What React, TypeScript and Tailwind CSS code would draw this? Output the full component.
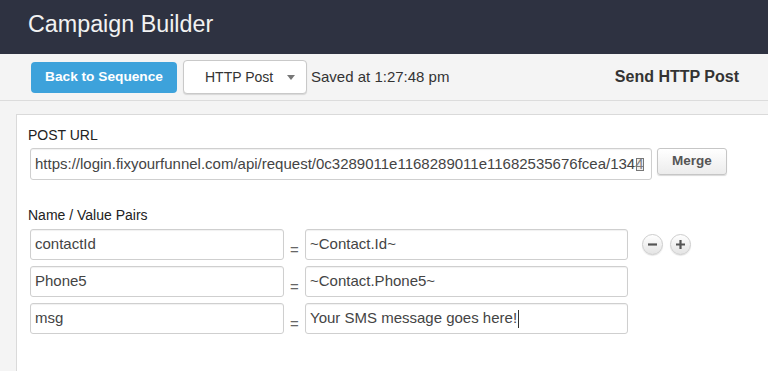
const FONT = "font-['Liberation_Sans',Arial,Helvetica,sans-serif]";

type Pair = { name: string; value: string; caret?: boolean };

const PAIRS: Pair[] = [
  { name: "contactId", value: "~Contact.Id~" },
  { name: "Phone5", value: "~Contact.Phone5~" },
  { name: "msg", value: "Your SMS message goes here!", caret: true },
];

export default function App() {
  return (
    <div className={`${FONT} h-[371px] w-[768px] overflow-hidden bg-[#f4f4f4] text-[#333]`}>
      <header className="h-[54px] bg-[#2e3241] pl-[28px] pt-[9px]">
        <h1 className="text-[23.3px] leading-[30px] text-[#f2f2f2]">Campaign Builder</h1>
      </header>

      <div className="flex h-[47px] items-center border-b border-[#dcdcdc] pl-[31px] pr-[29px]">
        <button
          type="button"
          className="h-[31px] w-[146px] rounded-[4px] bg-[#3da2db] text-[13.7px] font-bold text-white"
        >
          Back to Sequence
        </button>
        <div className="ml-[6px] flex h-[34px] w-[124px] items-center gap-[14px] rounded-[4px] border border-[#c9c9c9] bg-white pl-[21px] shadow-[0_1px_1px_rgba(0,0,0,0.12)]">
          <span className="text-[14px] text-[#333]">HTTP Post</span>
          <svg width="8" height="5" viewBox="0 0 8 5" aria-hidden>
            <path d="M0 0h8L4 5z" fill="#777" />
          </svg>
        </div>
        <span className="ml-[4px] text-[15px] text-[#333]">Saved at 1:27:48 pm</span>
        <span className="ml-auto text-[16px] font-bold text-[#333]">Send HTTP Post</span>
      </div>

      <div className="pl-[16px] pt-[13px]">
        <div className="h-[260px] border-l border-t border-[#dadada] bg-white pl-[11px] pt-[12px]">
          <label className="block text-[14px] leading-[16px] text-[#222]">POST URL</label>
          <div className="ml-[2px] mt-[5px] flex items-start">
            <div className="relative flex h-[32px] w-[622px] items-center overflow-hidden whitespace-nowrap rounded-[3px] border border-[#cfcfcf] pl-[4px] text-[15px] text-[#444] shadow-[inset_0_1px_1px_rgba(0,0,0,0.06)]">
              https://login.fixyourfunnel.com/api/request/0c3289011e1168289011e11682535676fcea/1344
              <span className="absolute right-[7px] top-[9px] h-[13px] w-[8px] border border-[#777] bg-[#d8d8d8]/40" />
            </div>
            <button
              type="button"
              className="ml-[5px] h-[27px] w-[70px] rounded-[3px] border border-[#c6c6c6] bg-gradient-to-b from-white to-[#ececec] text-[13.5px] font-bold text-[#555] shadow-[0_1px_1px_rgba(0,0,0,0.15)]"
            >
              Merge
            </button>
          </div>

          <label className="mt-[27px] block text-[14px] leading-[16px] text-[#222]">Name / Value Pairs</label>
          <div className="ml-[2px] mt-[6px] flex flex-col gap-[6px]">
            {PAIRS.map((p, i) => (
              <div key={p.name} className="flex items-center">
                <div className="flex h-[31px] w-[254px] items-center rounded-[3px] border border-[#cfcfcf] pl-[4px] text-[15px] text-[#444] shadow-[inset_0_1px_1px_rgba(0,0,0,0.06)]">
                  {p.name}
                </div>
                <div className="flex h-[31px] w-[21px] justify-center">
                  <span className="mt-[13px] text-[15px] leading-[15px] text-[#666]">=</span>
                </div>
                <div className="flex h-[31px] w-[323px] items-center rounded-[3px] border border-[#cfcfcf] pl-[4px] text-[15px] text-[#444] shadow-[inset_0_1px_1px_rgba(0,0,0,0.06)]">
                  {p.value}
                  {p.caret && <span className="ml-[1px] h-[18px] w-px bg-[#333]" />}
                </div>
                {i === 0 && (
                  <div className="ml-[14px] flex gap-[7px]">
                    <RoundButton kind="minus" />
                    <RoundButton kind="plus" />
                  </div>
                )}
              </div>
            ))}
          </div>
        </div>
      </div>
    </div>
  );
}

function RoundButton({ kind }: { kind: "minus" | "plus" }) {
  return (
    <span className="flex h-[21px] w-[21px] items-center justify-center rounded-full border border-[#cdcdcd] bg-gradient-to-b from-white to-[#e4e4e4] shadow-[0_1px_1px_rgba(0,0,0,0.1)]">
      <svg width="11" height="11" viewBox="0 0 11 11" aria-hidden>
        <path
          d={kind === "minus" ? "M1 5.5h9" : "M1 5.5h9M5.5 1v9"}
          stroke="#555"
          strokeWidth="2.2"
        />
      </svg>
    </span>
  );
}
